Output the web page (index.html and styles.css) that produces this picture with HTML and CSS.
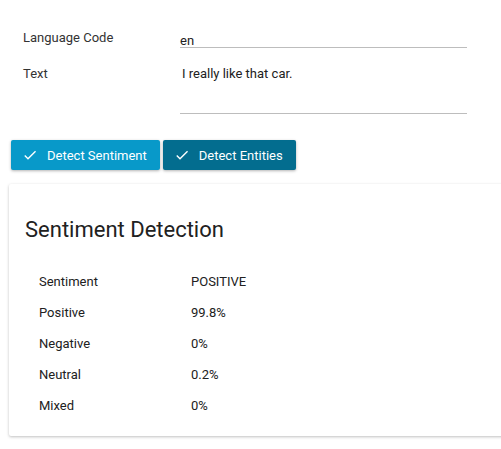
FILE: index.html
```html
<!DOCTYPE html>
<html>
<head>
<meta charset="utf-8">
<link rel="stylesheet" href="styles.css">
</head>
<body>
<div class="page">
  <form class="form">
    <div class="field">
      <label class="label">Language Code</label>
      <div class="input">en</div>
    </div>
    <div class="field field-text">
      <label class="label">Text</label>
      <div class="input textarea">I really like that car.</div>
    </div>
  </form>
  <div class="actions">
    <button class="btn btn-primary" type="button">
      <svg class="check" viewBox="0 0 24 24" width="16" height="16"><path d="M9 16.17L4.83 12l-1.42 1.41L9 19 21 7l-1.41-1.41z" fill="#fff"/></svg>
      Detect Sentiment
    </button>
    <button class="btn btn-dark" type="button">
      <svg class="check" viewBox="0 0 24 24" width="16" height="16"><path d="M9 16.17L4.83 12l-1.42 1.41L9 19 21 7l-1.41-1.41z" fill="#fff"/></svg>
      Detect Entities
    </button>
  </div>
  <section class="card">
    <h2 class="card-title">Sentiment Detection</h2>
    <table class="results">
      <tr><td>Sentiment</td><td>POSITIVE</td></tr>
      <tr><td>Positive</td><td>99.8%</td></tr>
      <tr><td>Negative</td><td>0%</td></tr>
      <tr><td>Neutral</td><td>0.2%</td></tr>
      <tr><td>Mixed</td><td>0%</td></tr>
    </table>
  </section>
</div>
</body>
</html>
```
FILE: styles.css
```css
html, body {
  margin: 0;
  padding: 0;
  background: #fff;
}
body {
  font-family: Roboto, "Noto Sans", sans-serif;
  font-size: 13px;
  color: #212121;
}
.page {
  padding: 0 0 13px 9px;
  overflow: hidden;
}
.form {
  padding: 28px 0 0 14px;
  margin: 0;
  width: 444px;
}
.field {
  display: grid;
  grid-template-columns: 157px 287px;
}
.label {
  line-height: 20px;
  color: #333;
}
.input {
  line-height: 20px;
  padding-top: 3px;
  border-bottom: 1px solid #bdbdbd;
  height: 16px;
  color: #212121;
  margin-bottom: 14px;
}
.field-text {
  padding-top: 2px;
}
.textarea {
  height: 49px;
  padding-top: 0;
  padding-left: 2px;
  margin-bottom: 0;
}
.actions {
  display: flex;
  gap: 3px;
  margin-top: 26px;
  padding-left: 2px;
}
.btn {
  display: flex;
  align-items: center;
  gap: 9px;
  height: 30px;
  border: none;
  border-radius: 2px;
  color: #fff;
  font-family: Roboto, "Noto Sans", sans-serif;
  font-size: 13px;
  padding: 0 13px 0 11px;
  box-shadow: 0 1px 3px rgba(0,0,0,0.3);
}
.btn-primary { background: #0899c9; }
.btn-dark { background: #036d8f; }
.check { display: block; }
.card {
  margin-top: 14px;
  margin-right: -20px;
  height: 252px;
  box-sizing: border-box;
  padding: 33px 0 0 16px;
  box-shadow: 0 1px 3px rgba(0,0,0,0.25);
  border-radius: 2px;
}
.card-title {
  margin: 0;
  font-weight: 400;
  font-size: 22px;
  line-height: 26px;
  color: #212121;
}
.results {
  margin-top: 23px;
  border-collapse: collapse;
  margin-left: 14px;
}
.results td {
  height: 31px;
  padding: 0;
  vertical-align: middle;
}
.results td:first-child { width: 152px; }
```
